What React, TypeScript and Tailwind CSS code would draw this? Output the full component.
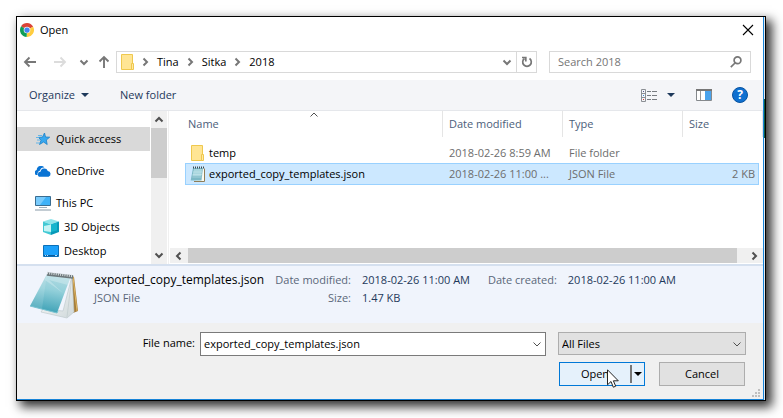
import React from "react";

type IconProps = { className?: string };

function ChromeIcon() {
  return (
    <svg viewBox="0 0 16 16" className="size-[14px] shrink-0" aria-hidden="true">
      <path d="M8 8 L1.2 3.8 A8 8 0 0 1 15 4.2 Z" fill="#db4437" />
      <path d="M8 8 L15 4.2 A8 8 0 0 1 7.6 16 Z" fill="#ffcd40" />
      <path d="M8 8 L7.6 16 A8 8 0 0 1 1.2 3.8 Z" fill="#0f9d58" />
      <circle cx="8" cy="8" r="3.8" fill="#f1f1f1" />
      <circle cx="8" cy="8" r="3" fill="#4285f4" />
    </svg>
  );
}

function ArrowIcon({ className = "" }: IconProps) {
  return (
    <svg viewBox="0 0 14 14" className={`size-[14px] ${className}`} fill="none" stroke="currentColor" strokeWidth="1.900" aria-hidden="true">
      <path d="M13 7H2M6.500 2.500 2 7l4.500 4.500" />
    </svg>
  );
}

function Chevron({ className = "" }: IconProps) {
  return (
    <svg viewBox="0 0 10 10" className={`size-[10px] shrink-0 ${className}`} fill="none" stroke="currentColor" aria-hidden="true">
      <path d="M1.500 3.500L5 7l3.500-3.500" />
    </svg>
  );
}

function Caret({ className = "" }: IconProps) {
  return (
    <svg viewBox="0 0 8 4" className={`h-1 w-2 ${className}`} fill="currentColor" aria-hidden="true">
      <path d="M0 0h8L4 4z" />
    </svg>
  );
}

function FolderIcon() {
  return (
    <svg viewBox="0 0 13 16" className="h-4 w-[13px] shrink-0" aria-hidden="true">
      <path d="M.5.5h11v15H.5z" fill="#ffe594" stroke="#efc84e" />
      <path d="M10.500 9.500h2v6h-2z" fill="#ffe9a2" stroke="#efc84e" />
    </svg>
  );
}

function NotepadSmall() {
  return (
    <svg viewBox="0 0 16 17" className="h-[17px] w-4 shrink-0" aria-hidden="true">
      <path d="M13 2l2 1v12.500H5z" fill="#fbfbf3" />
      <path d="M14.500 2.500v13H4" fill="none" stroke="#8f7d58" />
      <path d="M3 2h10l-1.500 12.500H.7z" fill="#7db9c6" />
      <path d="M4 3h8l-.7 7H2.400z" fill="#a9d6de" />
      <path d="M3 6h9M2.600 8.500h9.200M2.300 11h9.200" stroke="#cde8ee" strokeWidth=".5" />
      <path d="M3 1.500h11" stroke="#3f4c50" strokeWidth="1.800" strokeDasharray="1 1" />
    </svg>
  );
}

function NotepadLarge() {
  return (
    <svg viewBox="0 0 50 48" className="h-12 w-[50px] shrink-0" aria-hidden="true">
      <defs>
        <linearGradient id="cover" x1="0.600" y1="0" x2="0.400" y2="1">
          <stop offset="0" stopColor="#b4dbe2" />
          <stop offset=".4" stopColor="#93d0da" />
          <stop offset="1" stopColor="#3ba0b5" />
        </linearGradient>
        <linearGradient id="pages" x1="0" y1="0" x2="1" y2="1">
          <stop offset="0" stopColor="#ffffff" />
          <stop offset="1" stopColor="#cfd8da" />
        </linearGradient>
      </defs>
      <path d="M42 4l3 2 4 34-5 2z" fill="#a57c38" />
      <path d="M44 6l4 34" stroke="#e0b765" strokeWidth="1" />
      <path d="M43 5l2 36-7 6-26-6 2-3 20 2z" fill="url(#pages)" stroke="#b9c4c8" strokeWidth=".6" />
      <path d="M43 5l-5 41" stroke="#bcc7ca" strokeWidth=".6" />
      <path d="M18 3l24 2-14 37L1 35z" fill="url(#cover)" />
      <path d="M18 3l-2 6 18 13L20 9l19 5 3-9z" fill="#e1f3f6" opacity=".35" />
      <path d="M18 3l-5 35L1 35z" fill="#ffffff" opacity=".12" />
      <path d="M1 35l27 7 1-2" fill="none" stroke="#78c2d0" />
      <path d="M18 3l26 3" stroke="#6d777b" strokeWidth="3.500" />
      <path d="M18 2l26 3" stroke="#d8dee0" strokeWidth="2.500" strokeDasharray="1 1.200" />
    </svg>
  );
}

function StarIcon() {
  return (
    <svg viewBox="0 0 16 14" className="h-[14px] w-4" aria-hidden="true">
      <path d="M9.500 1l1 4 4.200.2-3.400 2.800.9 4.500L8.600 10l-4.100 2.500L6 8.200 3.500 5.400l4-.3z" fill="#38a8ef" stroke="#1a7fc6" strokeWidth=".8" />
      <path d="M3 3.500h4M1 5.500h3M2 8h3M1 11h4" stroke="#58b2ea" strokeWidth=".9" />
    </svg>
  );
}

function CloudIcon() {
  return (
    <svg viewBox="0 0 16 11" className="h-[11px] w-4" fill="#0a74d4" aria-hidden="true">
      <path d="M1.200 9A2.700 2.700 0 0 1 1.700 4 4.300 4.300 0 0 1 9.400 1.600 4 4 0 0 0 5 4.600 3.600 3.600 0 0 0 2.700 9z" />
      <path d="M5.200 10.800a2.500 2.500 0 0 1 .3-5A3.800 3.800 0 0 1 12.800 5a3 3 0 0 1 .8 5.800z" />
    </svg>
  );
}

function ComputerIcon() {
  return (
    <svg viewBox="0 0 16 15" className="h-[15px] w-4" aria-hidden="true">
      <path d="M.5.5h15v9H.5z" fill="#3fb2f8" stroke="#3a6d91" />
      <path d="M1 1h10L5 9H1z" fill="#79cbfc" />
      <path d="M4 11.500h8" stroke="#9db0bc" />
      <path d="M0 14h16" stroke="#8799a7" />
    </svg>
  );
}

function CubeIcon() {
  return (
    <svg viewBox="0 0 16 16" className="size-4" aria-hidden="true">
      <path d="M8 0l8 2.500-8 3L0 2.500z" fill="#8fe4ea" />
      <path d="M0 2.500l8 3V16l-8-3z" fill="#42c9d4" />
      <path d="M16 2.500l-8 3V16l8-3z" fill="#0899b8" />
      <path d="M1 7l7-1.500V13l-7-1z" fill="#c6f3f4" />
      <path d="M8 5.500l6-2v8L8 13z" fill="#16b5cd" />
    </svg>
  );
}

function DesktopIcon() {
  return (
    <svg viewBox="0 0 16 12" className="h-3 w-4" aria-hidden="true">
      <path d="M.5.5h15v11H.5z" fill="#1ca1fa" stroke="#0b70b8" />
      <path d="M1 10.500h14" stroke="#0c5c9c" />
      <path d="M2 10.500h1M4 10.500h1M12 10.500h2" stroke="#b8e2ff" />
    </svg>
  );
}

const places = [
  { label: "Quick access", icon: <StarIcon />, row: "bg-[#d9d9d9] pl-[18px]" },
  { label: "OneDrive", icon: <CloudIcon />, row: "mt-2 pl-[18px]" },
  { label: "This PC", icon: <ComputerIcon />, row: "mt-2 pl-[18px]" },
  { label: "3D Objects", icon: <CubeIcon />, row: "pl-[26px]" },
  { label: "Desktop", icon: <DesktopIcon />, row: "pl-[26px]" },
];

function TitleBar() {
  return (
    <header className="flex h-[26px] items-center gap-[6px] pl-[3px] pr-[9px]">
      <ChromeIcon />
      <h1 className="flex-1">Open</h1>
      <button aria-label="Close" className="p-0">
        <svg viewBox="0 0 12 12" className="size-3" stroke="#000" strokeWidth="1.100" aria-hidden="true">
          <path d="M1 1l10 10M11 1L1 11" />
        </svg>
      </button>
    </header>
  );
}

function NavigationRow() {
  return (
    <div className="flex h-[37px] items-center pl-[6px] pr-3">
      <button aria-label="Back" className="text-[#777]"><ArrowIcon /></button>
      <button aria-label="Forward" className="ml-4 text-[#dcdcdc]"><ArrowIcon className="rotate-180" /></button>
      <button aria-label="Recent locations" className="ml-3 text-[#777]"><Chevron className="size-2 stroke-2" /></button>
      <button aria-label="Up" className="ml-2 text-[#777]"><ArrowIcon className="rotate-90" /></button>
      <div className="ml-[5px] flex h-[22px] flex-1 items-center border border-[#d9d9d9] pl-1">
        <FolderIcon />
        <nav aria-label="Address" className="flex flex-1 items-center">
          {["Tina", "Sitka", "2018"].map((name) => (
            <React.Fragment key={name}>
              <Chevron className="mr-[7px] ml-[6px] size-2 -rotate-90 stroke-2 text-[#777]" />
              <button>{name}</button>
            </React.Fragment>
          ))}
        </nav>
        <button aria-label="Previous locations" className="mr-1 text-[#777]"><Chevron className="stroke-2" /></button>
        <button aria-label="Refresh" className="flex h-full w-5 items-center justify-center border-l border-[#d9d9d9] text-[#777]">
          <svg viewBox="0 0 12 12" className="size-3" fill="none" stroke="currentColor" strokeWidth="1.700" aria-hidden="true">
            <path d="M8.500 2.500a4.300 4.300 0 1 1-5 0" />
            <path d="M1 1.500h3.800v4" />
          </svg>
        </button>
      </div>
      <label className="ml-3 flex h-[22px] w-[202px] items-center border border-[#d9d9d9] pl-2 pr-2">
        <input aria-label="Search 2018" placeholder="Search 2018" className="min-w-0 flex-1 outline-none placeholder:text-[#757575]" />
        <svg viewBox="0 0 12 12" className="size-3" fill="none" stroke="#777" strokeWidth="1.700" aria-hidden="true">
          <circle cx="7.500" cy="4.300" r="3.400" />
          <path d="M5 7L.8 11.200" />
        </svg>
      </label>
    </div>
  );
}

function Toolbar() {
  return (
    <div className="flex h-[31px] items-center border-b border-[#e5e7eb] bg-[#f4f5f8] pl-3 pr-[15px] text-[#1e395b]">
      <button className="flex items-center gap-[6px]">Organize <Caret /></button>
      <button className="ml-[31px]">New folder</button>
      <button aria-label="Change your view" className="ml-auto flex items-center gap-[10px]">
        <svg viewBox="0 0 16 13" className="h-[13px] w-4" fill="none" aria-hidden="true">
          <path d="M.5.5h4v12h-4zM.5 4.500h4M.5 8.500h4" stroke="#8b8f94" />
          <path d="M6 2.500h4m1 0h5M6 6.500h4m1 0h5M6 10.500h4m1 0h5" stroke="#777b80" />
          <path d="M2 2.500h1" stroke="#558" />
          <path d="M2 6.500h1" stroke="#3888d8" />
          <path d="M2 10.500h1" stroke="#d33" />
        </svg>
        <Caret />
      </button>
      <button aria-label="Show the preview pane" className="ml-[21px]">
        <svg viewBox="0 0 16 12" className="h-3 w-4" aria-hidden="true">
          <path d="M.5.5h15v11H.5z" fill="#fff" stroke="#85898d" />
          <path d="M0 1h16" stroke="#777" strokeWidth="2" />
          <path d="M4.500 2v9" stroke="#999" />
          <path d="M9 2h6v9H9z" fill="#4aa3ec" />
        </svg>
      </button>
      <button aria-label="Help" className="ml-5 flex size-4 items-center justify-center rounded-full border border-[#0853a0] bg-[#0f70d0] text-xs leading-none font-bold text-white">?</button>
    </div>
  );
}

function Sidebar() {
  return (
    <div className="flex w-[150px] shrink-0">
      <nav aria-label="Places" className="flex-1 pt-4 pr-px">
        {places.map(({ label, icon, row }) => (
          <a key={label} href="#" className={`flex h-6 items-center gap-[5px] ${row}`}>
            {icon}
            {label}
          </a>
        ))}
      </nav>
      <div className="flex w-4 flex-col items-center bg-[#f0f0f0] text-[#505050]">
        <Chevron className="mt-1 mb-[3px] rotate-180 stroke-2" />
        <div className="h-[50px] w-full bg-[#cdcdcd]" />
        <Chevron className="mt-auto mb-1 stroke-2" />
      </div>
    </div>
  );
}

function FileList() {
  const chosen = "border-y border-[#99d1ff] bg-[#cce8ff]";
  return (
    <section className="flex min-w-0 flex-1 flex-col pb-px">
      <div className="h-[137px] pl-[15px]">
        <table className="w-full table-fixed border-separate border-spacing-0 text-left">
          <colgroup>
            <col />
            <col className="w-[120px]" />
            <col className="w-[120px]" />
            <col className="w-[76px]" />
            <col className="w-1" />
          </colgroup>
          <thead className="text-[#4c607a]">
            <tr className="h-[26px]">
              <th className="relative border-r border-[#e5e5e5] p-0 pl-[3px] font-normal">
                Name
                <Chevron className="absolute top-0 left-1/2 -translate-x-1/2 -translate-y-px rotate-180 text-[#505050]" />
              </th>
              <th className="border-r border-[#e5e5e5] p-0 pl-[6px] font-normal">Date modified</th>
              <th className="border-r border-[#e5e5e5] p-0 pl-[6px] font-normal">Type</th>
              <th colSpan={2} className="border-r border-[#e5e5e5] p-0 pl-[6px] font-normal">Size</th>
            </tr>
          </thead>
          <tbody className="text-[#6d6d6d]">
            <tr aria-hidden="true" className="h-[5px]"><td colSpan={5} className="p-0" /></tr>
            <tr className="h-[21px]">
              <td className="p-0 pl-[6px] text-black"><span className="flex items-center gap-[5px]"><FolderIcon />temp</span></td>
              <td className="p-0 pl-[6px] whitespace-nowrap">2018-02-26 8:59 AM</td>
              <td className="p-0 pl-[6px]">File folder</td>
              <td className="p-0" />
              <td className="p-0" />
            </tr>
            <tr className="h-[22px]">
              <td className={`border-l p-0 pl-1 text-black ${chosen}`}><span className="flex items-center gap-[3px]"><NotepadSmall />exported_copy_templates.json</span></td>
              <td className={`p-0 pl-[6px] whitespace-nowrap ${chosen}`}>2018-02-26 11:00 ...</td>
              <td className={`p-0 pl-[6px] ${chosen}`}>JSON File</td>
              <td className={`border-r p-0 pr-[3px] text-right ${chosen}`}>2 KB</td>
              <td className="p-0" />
            </tr>
          </tbody>
        </table>
      </div>
      <div className="flex h-[15px] items-center bg-[#f0f0f0] text-[#505050]">
        <Chevron className="mx-1 rotate-90 stroke-2" />
        <div className="h-full flex-1 bg-[#cdcdcd]" />
        <Chevron className="ml-3 mr-1 -rotate-90 stroke-2" />
      </div>
    </section>
  );
}

function Details() {
  return (
    <section aria-label="Details" className="flex h-[59px] border-t-2 border-[#d5e0ef] bg-[#f0f4fc] pt-[5px] pl-3 text-[#5a6779]">
      <NotepadLarge />
      <div className="ml-[15px] w-[179px] leading-[18px] whitespace-nowrap">
        <p className="text-xs leading-[18px] text-black">exported_copy_templates.json</p>
        <p>JSON File</p>
      </div>
      <dl className="grid grid-cols-[78px_110px] content-start gap-x-[11px] leading-[18px] whitespace-nowrap">
        <dt className="text-right">Date modified:</dt>
        <dd className="text-[#1e395b]">2018-02-26 11:00 AM</dd>
        <dt className="text-right">Size:</dt>
        <dd className="text-[#1e395b]">1.47 KB</dd>
      </dl>
      <dl className="ml-4 flex gap-[11px] leading-[18px] whitespace-nowrap">
        <dt>Date created:</dt>
        <dd className="text-[#1e395b]">2018-02-26 11:00 AM</dd>
      </dl>
    </section>
  );
}

function Footer() {
  return (
    <footer className="relative h-[76px] bg-[#f0f0f0] pt-[9px] pr-[17px]">
      <div className="flex items-start">
        <label htmlFor="file-name" className="w-[178px] pt-[3px] text-right">File name:</label>
        <div className="ml-[5px] flex h-6 flex-1 items-center border border-[#7a7a7a] bg-white px-[3px]">
          <input id="file-name" defaultValue="exported_copy_templates.json" className="min-w-0 flex-1 outline-none" />
          <button aria-label="Recent file names" className="text-[#505050]"><Chevron /></button>
        </div>
        <div className="relative ml-3 w-[188px]">
          <select aria-label="File type" className="h-[23px] w-full appearance-none border border-[#adadad] bg-[#e1e1e1] pl-[3px] outline-none">
            <option>All Files</option>
          </select>
          <Chevron className="pointer-events-none absolute top-[7px] right-1 text-[#505050]" />
        </div>
      </div>
      <div className="mt-[6px] flex justify-end gap-[14px] pr-px">
        <div className="relative flex h-6 w-[86px] items-center border border-[#0078d7] bg-[#e5f1fb]">
          <button className="h-full flex-1">Open</button>
          <button aria-label="More open options" className="flex h-[18px] w-[14px] items-center justify-center border-l-2 border-[#777]"><Caret /></button>
          <svg viewBox="0 0 12 19" className="absolute top-[6px] left-[47px] h-[19px] w-3" fill="#fff" stroke="#222" aria-hidden="true">
            <path d="M.5.800v15l3.500-3.300 2.300 5.700 2.400-1-2.300-5.400h4.900z" />
          </svg>
        </div>
        <button className="h-6 w-[86px] border border-[#adadad] bg-[#e1e1e1]">Cancel</button>
      </div>
      <svg viewBox="0 0 8 8" className="absolute right-[3px] bottom-[2px] size-2" fill="#bfbfbf" aria-hidden="true">
        <path d="M6 0h2v2H6zM3 3h2v2H3zM6 3h2v2H6zM0 6h2v2H0zM3 6h2v2H3zM6 6h2v2H6z" />
      </svg>
    </footer>
  );
}

export default function App() {
  return (
    <main className="bg-white pt-4 pr-[17px] pb-[17px] pl-4 font-['Open_Sans','Noto_Sans',sans-serif] text-[11px] leading-4 text-black">
      <div role="dialog" aria-label="Open" className="flex border border-black bg-white shadow-[5px_5px_10px_1px_rgba(0,0,0,0.8)]">
        <div className="min-w-0 flex-1 border-r border-b border-[#1883d7]">
          <TitleBar />
          <NavigationRow />
          <Toolbar />
          <div className="flex">
            <Sidebar />
            <div className="mx-px w-px bg-[#f0f0f0]" />
            <FileList />
          </div>
          <Details />
          <Footer />
        </div>
        <div className="w-px bg-[#dfe8f0]">
          <div className="mt-[82px] h-[39px] bg-[#0a5c40]" />
        </div>
      </div>
    </main>
  );
}
